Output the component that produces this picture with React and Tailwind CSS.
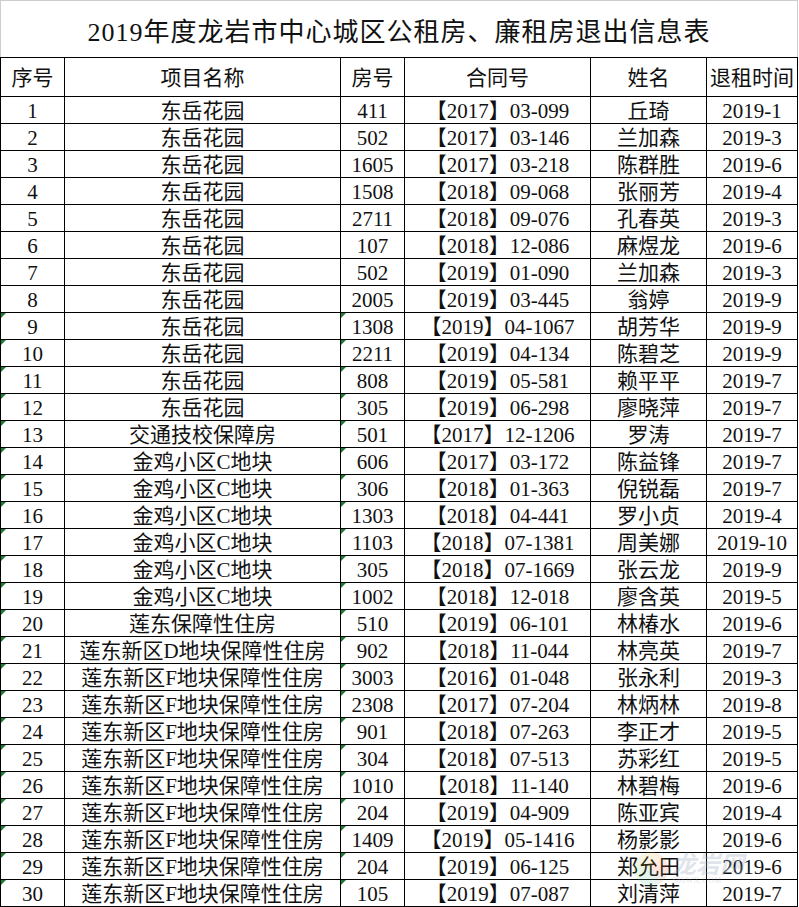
import React from "react";

// 退出信息表数据
const rows = [
  ["1", "东岳花园", "411", "【2017】03-099", "丘琦", "2019-1"],
  ["2", "东岳花园", "502", "【2017】03-146", "兰加森", "2019-3"],
  ["3", "东岳花园", "1605", "【2017】03-218", "陈群胜", "2019-6"],
  ["4", "东岳花园", "1508", "【2018】09-068", "张丽芳", "2019-4"],
  ["5", "东岳花园", "2711", "【2018】09-076", "孔春英", "2019-3"],
  ["6", "东岳花园", "107", "【2018】12-086", "麻煜龙", "2019-6"],
  ["7", "东岳花园", "502", "【2019】01-090", "兰加森", "2019-3"],
  ["8", "东岳花园", "2005", "【2019】03-445", "翁婷", "2019-9"],
  ["9", "东岳花园", "1308", "【2019】04-1067", "胡芳华", "2019-9"],
  ["10", "东岳花园", "2211", "【2019】04-134", "陈碧芝", "2019-9"],
  ["11", "东岳花园", "808", "【2019】05-581", "赖平平", "2019-7"],
  ["12", "东岳花园", "305", "【2019】06-298", "廖晓萍", "2019-7"],
  ["13", "交通技校保障房", "501", "【2017】12-1206", "罗涛", "2019-7"],
  ["14", "金鸡小区C地块", "606", "【2017】03-172", "陈益锋", "2019-7"],
  ["15", "金鸡小区C地块", "306", "【2018】01-363", "倪锐磊", "2019-7"],
  ["16", "金鸡小区C地块", "1303", "【2018】04-441", "罗小贞", "2019-4"],
  ["17", "金鸡小区C地块", "1103", "【2018】07-1381", "周美娜", "2019-10"],
  ["18", "金鸡小区C地块", "305", "【2018】07-1669", "张云龙", "2019-9"],
  ["19", "金鸡小区C地块", "1002", "【2018】12-018", "廖含英", "2019-5"],
  ["20", "莲东保障性住房", "510", "【2019】06-101", "林椿水", "2019-6"],
  ["21", "莲东新区D地块保障性住房", "902", "【2018】11-044", "林亮英", "2019-7"],
  ["22", "莲东新区F地块保障性住房", "3003", "【2016】01-048", "张永利", "2019-3"],
  ["23", "莲东新区F地块保障性住房", "2308", "【2017】07-204", "林炳林", "2019-8"],
  ["24", "莲东新区F地块保障性住房", "901", "【2018】07-263", "李正才", "2019-5"],
  ["25", "莲东新区F地块保障性住房", "304", "【2018】07-513", "苏彩红", "2019-5"],
  ["26", "莲东新区F地块保障性住房", "1010", "【2018】11-140", "林碧梅", "2019-6"],
  ["27", "莲东新区F地块保障性住房", "204", "【2019】04-909", "陈亚宾", "2019-4"],
  ["28", "莲东新区F地块保障性住房", "1409", "【2019】05-1416", "杨影影", "2019-6"],
  ["29", "莲东新区F地块保障性住房", "204", "【2019】06-125", "郑允田", "2019-6"],
  ["30", "莲东新区F地块保障性住房", "105", "【2019】07-087", "刘清萍", "2019-7"],
];

const headers = ["序号", "项目名称", "房号", "合同号", "姓名", "退租时间"];

// Excel "number stored as text" marker
const Flag = () => (
  <span className="absolute left-0 top-0 w-0 h-0 border-t-[5px] border-r-[5px] border-t-[#1d7a32] border-r-transparent"></span>
);

const Cell = ({ children, flag, tall }) => (
  <div
    className={`relative flex items-center justify-center border-r border-b border-black whitespace-nowrap ${
      tall ? "h-[39px]" : "h-[27px]"
    }`}
  >
    {flag && <Flag />}
    <span className="leading-none pt-[2px]">{children}</span>
  </div>
);

export default function App() {
  return (
    <div
      className="relative w-[799px] h-[907px] overflow-hidden bg-white text-[#111] text-[21px]"
      style={{ fontFamily: '"Liberation Serif", "Noto Sans CJK SC", serif' }}
    >
      {/* Title */}
      <div className="w-[798px] h-[57px] border-t border-l border-r border-[#cdcdcd] flex items-center justify-center">
        <h1 className="text-[26px] font-normal leading-none pt-[8px] tracking-[1px]">
          2019年度龙岩市中心城区公租房、廉租房退出信息表
        </h1>
      </div>

      {/* Table */}
      <div className="w-[798px] border-l border-t border-black grid grid-cols-[64px_276px_64px_186px_116px_91px]">
        {headers.map((h) => (
          <Cell key={h} tall>
            {h}
          </Cell>
        ))}
        {rows.map((r) => {
          const flag = Number(r[0]) >= 9;
          return (
            <React.Fragment key={r[0]}>
              <Cell flag={flag}>{r[0]}</Cell>
              <Cell>{r[1]}</Cell>
              <Cell flag={flag}>{r[2]}</Cell>
              <Cell>{r[3]}</Cell>
              <Cell>{r[4]}</Cell>
              <Cell>{r[5]}</Cell>
            </React.Fragment>
          );
        })}
      </div>

      {/* Watermark */}
      <div className="absolute left-[634px] top-[852px] flex items-center gap-1 opacity-30 pointer-events-none">
        <div className="w-[34px] h-[34px] rounded-full bg-[conic-gradient(#f7b733,#fc4a1a,#4abdac,#7bc043,#f7b733)] opacity-50"></div>
        <div className="flex flex-col leading-none">
          <span className="text-[24px] italic text-[#9aa8c0] font-bold">龙岩网</span>
          <span className="text-[8px] text-[#9aa8c0] tracking-wider">S86WX.COM</span>
        </div>
      </div>
    </div>
  );
}
